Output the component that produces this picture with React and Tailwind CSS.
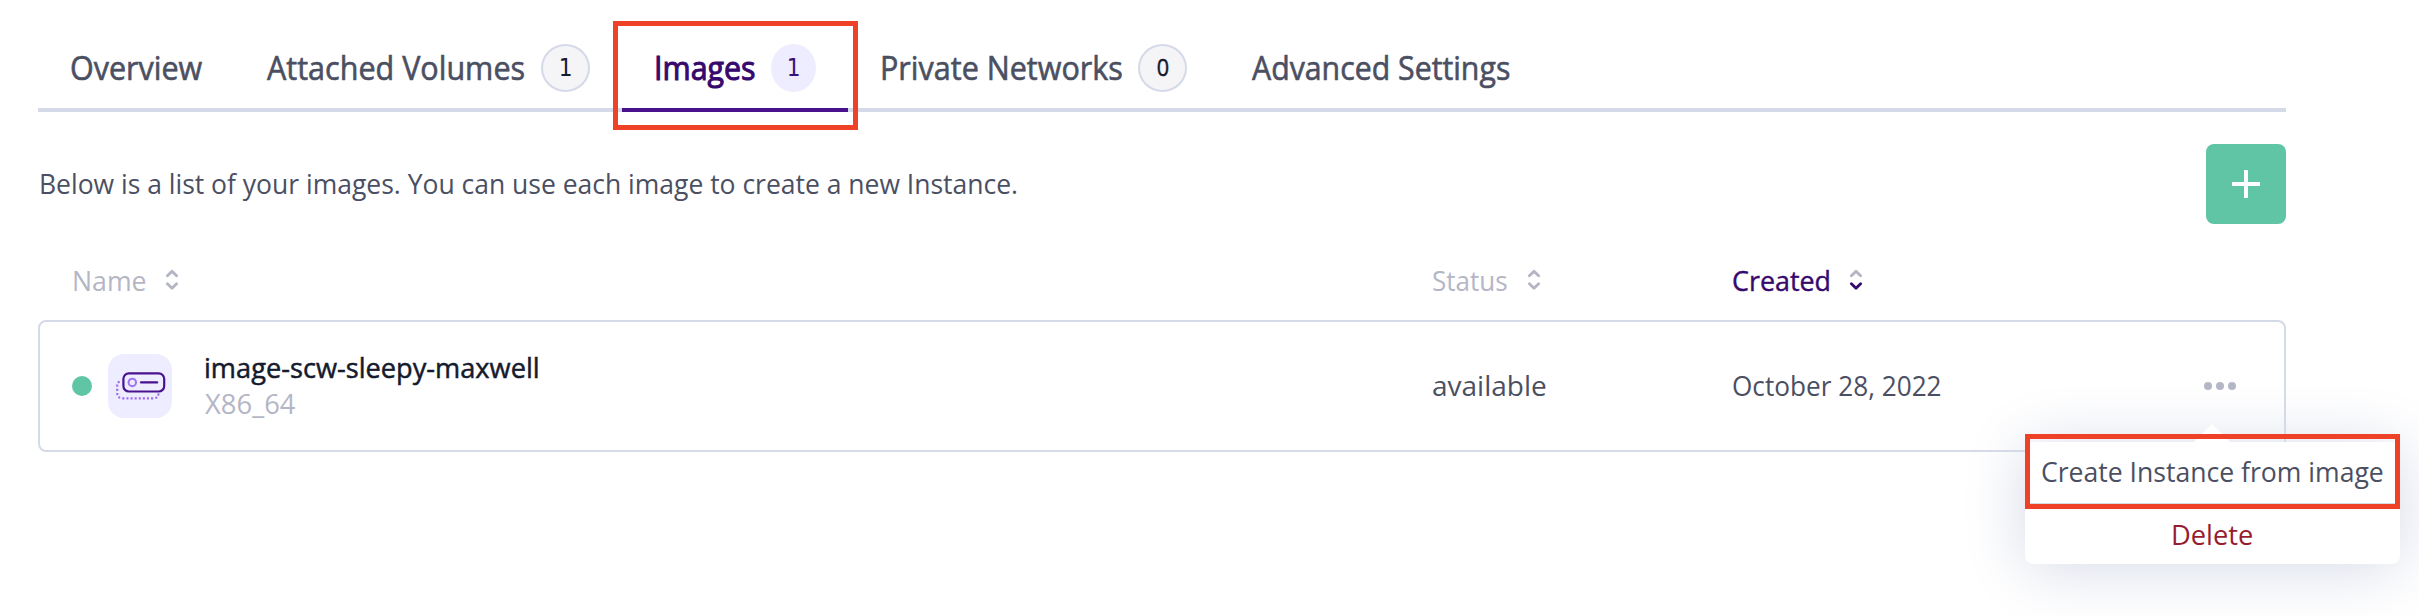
import React from "react";
import { clsx } from "clsx";

/* Slightly narrowed text line; the box keeps its width, the glyphs are condensed. */
function Text({ className, children }) {
  return (
    <span className={clsx("block origin-left whitespace-nowrap", className)}>
      {children}
    </span>
  );
}

function Badge({ active, children }) {
  return (
    <span
      className={clsx(
        "ml-4 flex h-12 shrink-0 items-center justify-center rounded-[50%] text-2xl leading-8",
        active
          ? "w-[45px] bg-[#eeedff] text-[#3b0f7a]"
          : "w-[49px] border-2 border-[#d5dae8] bg-[#f5f5f8] text-[#151a2d]"
      )}
    >
      {children}
    </span>
  );
}

function One() {
  return <span className="-mt-px block scale-x-90 font-['DejaVu_Sans',sans-serif]">1</span>;
}

function Tab({ width, active, children }) {
  return (
    <div
      className={clsx(
        "relative flex h-[84px] shrink-0 items-center border-b-4 px-8",
        width,
        active ? "border-[#48128f] text-[#36096d]" : "border-transparent text-[#4b4f62]"
      )}
    >
      {children}
    </div>
  );
}

const tabText = "pb-px text-[32px] leading-10";
const medium = "[-webkit-text-stroke:0.6px_currentColor]";

function SortIcon({ down = "#b4b6c5" }) {
  return (
    <svg className="h-6 w-4 shrink-0" viewBox="0 0 16 24" fill="none" strokeWidth="2.9" strokeLinecap="round" strokeLinejoin="round">
      <path d="M3.4 7.8 8 3.4l4.6 4.4" stroke="#b4b6c5" />
      <path d="M3.4 15.8 8 20.2l4.6-4.4" stroke={down} />
    </svg>
  );
}

function ImageIcon() {
  return (
    <svg className="size-16" viewBox="0 0 64 64" fill="none">
      <path
        d="M11.6 27.4Q9.2 28.6 9.2 32v6.5Q9.2 44.4 15 44.4H45Q50.4 44.4 50.6 39"
        stroke="#a06ff0"
        strokeWidth="2.2"
        strokeDasharray="2.1 2"
      />
      <rect x="15.4" y="19.3" width="40.8" height="18.2" rx="5.5" stroke="#48128f" strokeWidth="2.2" />
      <circle cx="24.3" cy="28.4" r="3.7" stroke="#a175f0" strokeWidth="2.1" />
      <path d="M33 28.4h16.2" stroke="#48128f" strokeWidth="2.2" strokeLinecap="round" />
    </svg>
  );
}

export default function App() {
  return (
    <div className="h-[616px] w-[2419px] overflow-hidden bg-white pl-[38px] pt-7 font-['Open_Sans','Noto_Sans',sans-serif] text-[28px] text-[#4b4f62]">
      <div className="w-[2248px]">
        <nav className="flex h-[84px] bg-[linear-gradient(to_top,#d5dae8_4px,transparent_4px)]">
          <Tab width="w-[197px]">
            <Text className={clsx(tabText, medium, "scale-x-[0.953]")}>Overview</Text>
          </Tab>
          <Tab width="w-[387px]">
            <Text className={clsx(tabText, medium, "w-[258px] scale-x-[0.954]")}>Attached Volumes</Text>
            <Badge><One /></Badge>
          </Tab>
          <Tab width="w-[226px]" active>
            <Text className={clsx(tabText, "w-[101px] scale-x-[0.950] [-webkit-text-stroke:1px_currentColor]")}>Images</Text>
            <Badge active><One /></Badge>
            <div className="absolute -left-[9px] -top-[7px] h-[109px] w-[245px] border-5 border-[#ee4127]" />
          </Tab>
          <Tab width="w-[371px]">
            <Text className={clsx(tabText, medium, "w-[242px] scale-x-[0.954]")}>Private Networks</Text>
            <Badge><span className="block scale-x-90 pb-[3px] [-webkit-text-stroke:0.5px_currentColor]">0</span></Badge>
          </Tab>
          <Tab width="w-[323px]">
            <Text className={clsx(tabText, medium, "ml-px scale-x-[0.946]")}>Advanced Settings</Text>
          </Tab>
        </nav>

        <div className="mt-8 flex h-20 items-center justify-between">
          <Text className="ml-px scale-x-[0.946] pb-[2px] leading-10">
            Below is a list of your images. You can use each image to create a new Instance.
          </Text>
          <button className="flex size-20 items-center justify-center rounded-lg bg-[#60c5a5]">
            <svg className="size-7" viewBox="0 0 28 28" fill="none" stroke="#fff" strokeWidth="4">
              <path d="M14 0v28M0 14h28" />
            </svg>
          </button>
        </div>

        <div className="mt-4 grid h-20 grid-cols-[1360px_300px_1fr] items-center pl-[34px] text-[#b4b6c5]">
          <div className="flex items-center gap-4">
            <Text className="w-[76px] scale-x-[0.952] pb-px leading-10">Name</Text>
            <SortIcon />
          </div>
          <div className="flex items-center gap-4">
            <Text className="w-[78px] scale-x-[0.929] pb-px leading-10">Status</Text>
            <SortIcon />
          </div>
          <div className="flex items-center gap-4 text-[#36096d]">
            <Text className="w-[100px] scale-x-[0.959] pb-px leading-10 [-webkit-text-stroke:0.4px_currentColor]">Created</Text>
            <SortIcon down="#36096d" />
          </div>
        </div>

        <div className="relative grid h-[132px] grid-cols-[1360px_300px_1fr_32px] items-center rounded-lg border-2 border-[#d5dae8] pl-8 pr-12">
          <div className="flex items-center">
            <span className="size-5 rounded-full bg-[#60c5a5]" />
            <span className="ml-4 size-16 rounded-2xl bg-[#eeedff]">
              <ImageIcon />
            </span>
            <div className="ml-8 pb-[2px] leading-9">
              <Text className="scale-x-[0.971] text-[#151a2d] [-webkit-text-stroke:0.5px_currentColor]">image-scw-sleepy-maxwell</Text>
              <Text className="ml-px scale-x-[0.978] text-[#b4b6c5]">X86_64</Text>
            </div>
          </div>
          <Text className="pb-[2px] leading-10">available</Text>
          <Text className="scale-x-[0.935] pb-[2px] leading-10">October 28, 2022</Text>
          <div className="flex gap-1">
            <span className="size-2 rounded-full bg-[#b4b6c5]" />
            <span className="size-2 rounded-full bg-[#b4b6c5]" />
            <span className="size-2 rounded-full bg-[#b4b6c5]" />
          </div>

          <div className="absolute left-[1985px] top-[120px] flex h-[122px] w-[375px] flex-col rounded-lg bg-white shadow-[0_4px_64px_#d4d9e6]">
            <svg className="absolute -top-[18px] left-[169px] h-[18px] w-9" viewBox="0 0 36 18" fill="#fff">
              <path d="M0 18 18 0l18 18z" />
            </svg>
            <div className="flex h-[63px] items-center border-b-2 border-[#d5dae8] pl-4">
              <Text className="scale-x-[0.949] pb-[3px] leading-9">Create Instance from image</Text>
            </div>
            <div className="flex h-[59px] items-center pl-[146px] text-[#971c30]">
              <Text className="scale-x-[0.974] pb-[2px] leading-9">Delete</Text>
            </div>
            <div className="absolute -top-2 left-0 h-[75px] w-[375px] border-5 border-[#ee4127]" />
          </div>
        </div>
      </div>
    </div>
  );
}
